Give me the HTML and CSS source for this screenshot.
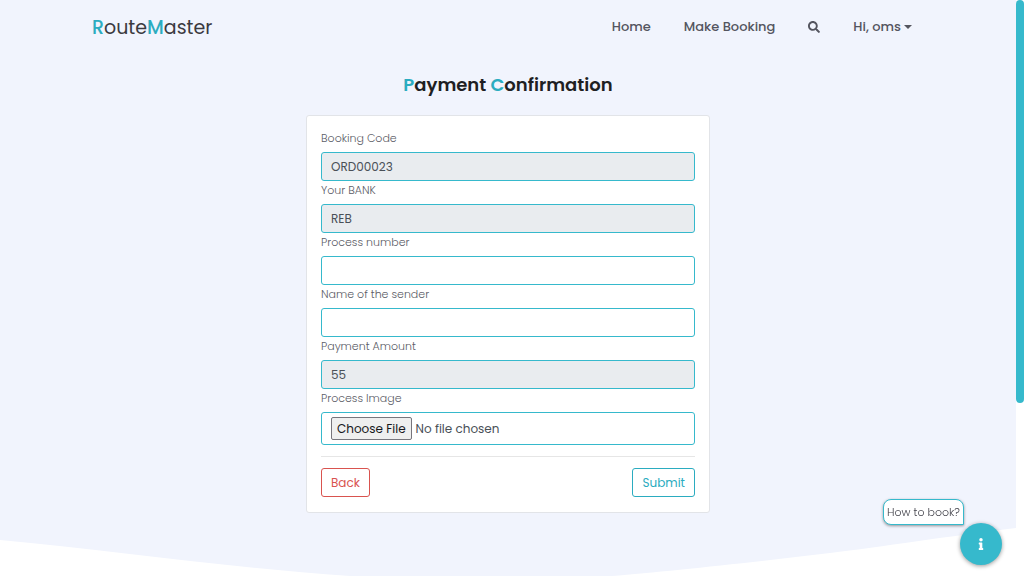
FILE: index.html
```html
<!DOCTYPE html>
<html lang="en">
<head>
<meta charset="utf-8">
<meta name="viewport" content="width=device-width, initial-scale=1">
<title>RouteMaster - Payment Confirmation</title>
<link rel="stylesheet" href="styles.css">
</head>
<body>
<div class="shell">
  <div class="page">
    <svg class="backdrop" viewBox="0 0 1016 576" preserveAspectRatio="none" aria-hidden="true">
      <path fill="#f1f4fd" d="M0 0H1016V528C950 536 880 547 830 553C740 564 650 573 600 577C520 582 430 581 350 576C230 568 110 550 0 540Z"/>
    </svg>
    <header class="navbar">
      <a class="brand" href="#"><span class="accent">R</span>oute<span class="accent">M</span>aster</a>
      <nav class="menu">
        <a class="menu-link" href="#">Home</a>
        <a class="menu-link" href="#">Make Booking</a>
        <a class="menu-link" href="#" aria-label="Search">
          <svg class="search-icon" viewBox="0 0 512 512" aria-hidden="true"><path fill="currentColor" d="M505 442.700L405.300 343c-4.500-4.500-10.600-7-17-7H372c27.600-35.300 44-79.700 44-128C416 93.100 322.900 0 208 0S0 93.100 0 208s93.100 208 208 208c48.300 0 92.700-16.400 128-44v16.300c0 6.400 2.500 12.500 7 17l99.700 99.700c9.400 9.400 24.600 9.400 33.900 0l28.300-28.300c9.400-9.400 9.400-24.600.1-34zM208 336c-70.700 0-128-57.200-128-128 0-70.700 57.200-128 128-128 70.700 0 128 57.200 128 128 0 70.700-57.200 128-128 128z"/></svg>
        </a>
        <a class="menu-link" href="#">Hi, oms<span class="caret"></span></a>
      </nav>
    </header>
    <main class="content">
      <h1 class="title"><span class="accent">P</span>ayment <span class="accent">C</span>onfirmation</h1>
      <form class="card">
        <label class="label" for="code">Booking Code</label>
        <input class="field" id="code" type="text" value="ORD00023" readonly>
        <label class="label" for="bank">Your BANK</label>
        <input class="field" id="bank" type="text" value="REB" readonly>
        <label class="label" for="number">Process number</label>
        <input class="field" id="number" type="text">
        <label class="label" for="sender">Name of the sender</label>
        <input class="field" id="sender" type="text">
        <label class="label" for="amount">Payment Amount</label>
        <input class="field" id="amount" type="text" value="55" readonly>
        <label class="label" for="image">Process Image</label>
        <input class="field file" id="image" type="file">
        <hr class="rule">
        <div class="actions">
          <button class="button back" type="button">Back</button>
          <button class="button submit" type="submit">Submit</button>
        </div>
      </form>
    </main>
    <div class="help">
      <span class="help-tip">How to book?</span>
      <button class="help-button" type="button" aria-label="How to book?">
        <svg class="info-icon" viewBox="0 0 192 512" aria-hidden="true"><path fill="currentColor" d="M20 424.200h20V279.800H20c-11 0-20-9-20-20V212c0-11 9-20 20-20h112c11 0 20 9 20 20v212.200h20c11 0 20 9 20 20V492c0 11-9 20-20 20H20c-11 0-20-9-20-20v-47.800c0-11 9-20 20-20zM96 0C56.200 0 24 32.200 24 72s32.200 72 72 72 72-32.200 72-72S135.800 0 96 0z"/></svg>
      </button>
    </div>
  </div>
  <div class="scroll-track"><div class="scroll-thumb"></div></div>
</div>
</body>
</html>
```
FILE: styles.css
```css
* {
  box-sizing: border-box;
}

body {
  margin: 0;
  background: #fff;
  color: #212529;
  font-family: Poppins, Inter, "Open Sans", sans-serif;
  font-size: 12px;
}

.shell {
  display: grid;
  grid-template-columns: 1fr 8px;
  min-height: 100vh;
}

.page {
  position: relative;
  isolation: isolate;
}

.backdrop {
  position: absolute;
  inset: 0;
  z-index: -1;
  width: 100%;
  height: 100%;
}

.accent {
  color: #2bacc0;
}

.navbar {
  display: flex;
  align-items: center;
  justify-content: space-between;
  max-width: 856px;
  height: 54px;
  margin: 0 auto;
  padding: 0 12px;
}

.brand {
  color: #3b3a40;
  font-size: 19px;
  text-decoration: none;
}

.brand .accent {
  font-weight: 500;
}

.menu {
  display: flex;
  align-items: center;
  gap: 9px;
}

.menu-link {
  display: flex;
  align-items: center;
  padding: 6px 12px;
  color: #54555f;
  font-size: 13px;
  font-weight: 500;
  text-decoration: none;
}

.search-icon {
  width: 12px;
  height: 12px;
}

.caret {
  margin-left: 3px;
  border: 4px solid transparent;
  border-top-color: currentColor;
  border-bottom: 0;
}

.content {
  padding: 16px 12px 63px;
}

.title {
  margin: 0 0 15px;
  color: #1f1f23;
  font-size: 18px;
  font-weight: 600;
  line-height: 30px;
  text-align: center;
}

.card {
  display: flex;
  flex-direction: column;
  max-width: 404px;
  margin: 0 auto;
  padding: 13px 14px 15px;
  border: 1px solid #e2e4e8;
  border-radius: 3px;
  background: #fff;
}

.label {
  margin-bottom: 5px;
  color: #5b5c66;
  font-size: 11px;
  font-weight: 300;
  line-height: 18px;
}

.field {
  width: 100%;
  height: 29px;
  padding: 0 9px;
  border: 1px solid #36b9cc;
  border-radius: 3px;
  background: #fff;
  color: #495057;
  font-family: inherit;
  font-size: 12px;
}

.field:read-only:not(.file) {
  background: #e9ecef;
}

.file {
  height: 33px;
  padding-top: 4px;
}

.file::file-selector-button {
  height: 23px;
  margin-right: 4px;
  padding: 0 5px;
  border: 1px solid #77757c;
  border-radius: 2px;
  background: #efefef;
  color: #18181c;
  font-family: inherit;
  font-size: 12px;
}

.rule {
  width: 100%;
  margin: 11px 0;
  border: 0;
  border-top: 1px solid #e6e6e6;
}

.actions {
  display: flex;
  justify-content: space-between;
}

.button {
  height: 29px;
  padding: 0 9px;
  border: 1px solid currentColor;
  border-radius: 3px;
  background: #fff;
  font-family: inherit;
  font-size: 12px;
}

.back {
  color: #d9534f;
}

.submit {
  color: #2bacc0;
}

.help {
  position: fixed;
  right: 22px;
  bottom: 11px;
  display: flex;
  align-items: flex-start;
}

.help-tip {
  margin-right: -4px;
  margin-bottom: 40px;
  padding: 0 3px;
  border: 1px solid #36b9cc;
  border-radius: 8px 8px 0 8px;
  background: #fff;
  box-shadow: 0 1px 3px #0006;
  color: #45454d;
  font-size: 11px;
  font-weight: 300;
  line-height: 24px;
}

.help-button {
  display: grid;
  align-self: flex-end;
  place-items: center;
  width: 42px;
  height: 42px;
  padding: 0;
  border: 0;
  border-radius: 50%;
  background: #36b9cc;
  box-shadow: 0 1px 4px #0006;
  color: #fff;
}

.info-icon {
  width: 6px;
  height: 12px;
}

.scroll-track {
  background: #fff;
}

.scroll-thumb {
  position: sticky;
  top: 0;
  height: 70vh;
  border-radius: 4px;
  background: #36b9cc;
}
```
